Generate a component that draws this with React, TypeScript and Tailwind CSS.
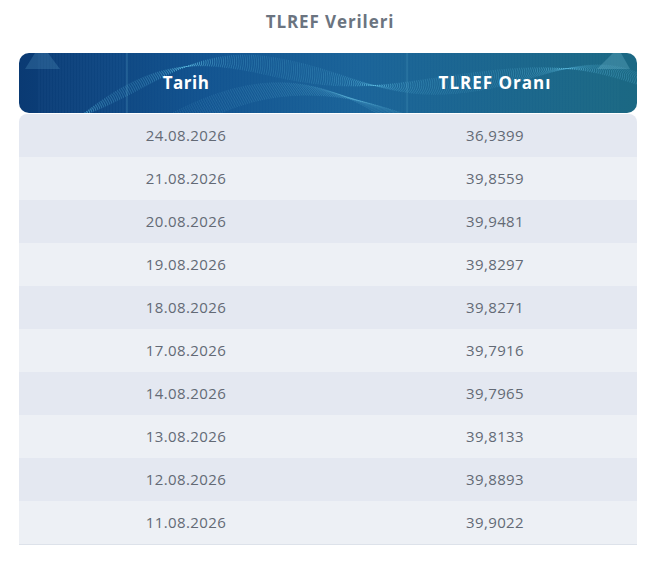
import React from "react";

const rows = [
  { date: "24.08.2026", rate: "36,9399" },
  { date: "21.08.2026", rate: "39,8559" },
  { date: "20.08.2026", rate: "39,9481" },
  { date: "19.08.2026", rate: "39,8297" },
  { date: "18.08.2026", rate: "39,8271" },
  { date: "17.08.2026", rate: "39,7916" },
  { date: "14.08.2026", rate: "39,7965" },
  { date: "13.08.2026", rate: "39,8133" },
  { date: "12.08.2026", rate: "39,8893" },
  { date: "11.08.2026", rate: "39,9022" },
];

// wavy dotted background for the header bar
function HeaderArt() {
  const waves = [];
  for (let i = 0; i < 20; i++) {
    const o = i * 1.6;
    // big ribbon: rises from bottom left, dips in the middle, climbs again on the right
    waves.push(
      <path
        key={"a" + i}
        d={`M 60 ${64} C 130 ${40 - o}, 170 ${-8 + o * 0.4}, 250 ${4 + o * 0.6} S 360 ${48 - o * 0.5}, 440 ${40 - o * 0.6} S 560 ${-4 + o * 0.5}, 620 ${20 + o * 0.4}`}
        fill="none"
        stroke="#6cc8ee"
        strokeOpacity={0.32}
        strokeWidth={0.7}
        strokeDasharray="0.8 1.4"
      />
    );
    // lower arc in the middle
    waves.push(
      <path
        key={"b" + i}
        d={`M ${150 + i * 2.5} 62 C ${230 + i} ${20 + o * 0.6}, ${290 + i} ${18 + o * 0.5}, ${360 + i * 1.5} ${62}`}
        fill="none"
        stroke="#7dd4f2"
        strokeOpacity={0.28}
        strokeWidth={0.7}
        strokeDasharray="0.8 1.4"
      />
    );
  }
  const stripes = [];
  for (let x = 20; x < 600; x += 3) {
    stripes.push(
      <line
        key={x}
        x1={x}
        y1={0}
        x2={x}
        y2={60}
        stroke="#9fd8ff"
        strokeOpacity={x < 110 ? 0.07 : 0.035}
        strokeWidth={1}
      />
    );
  }
  return (
    <svg
      className="absolute inset-0 h-full w-full"
      viewBox="0 0 618 60"
      preserveAspectRatio="none"
    >
      <defs>
        <linearGradient id="hg" x1="0" y1="0" x2="1" y2="0">
          <stop offset="0" stopColor="#0a3a73" />
          <stop offset="0.3" stopColor="#125390" />
          <stop offset="0.55" stopColor="#1a6399" />
          <stop offset="1" stopColor="#1b6883" />
        </linearGradient>
      </defs>
      <rect width="618" height="60" fill="url(#hg)" />
      {stripes}
      {waves}
      <line x1="108" y1="0" x2="108" y2="60" stroke="#8fe0f5" strokeOpacity="0.35" strokeWidth="0.8" />
      <line x1="388" y1="0" x2="388" y2="60" stroke="#8fe0f5" strokeOpacity="0.25" strokeWidth="0.8" />
      <polygon points="16,0 29,0 41,16 6,16" fill="#6fb0d8" fillOpacity="0.22" />
      <polygon points="594,0 602,0 611,16 578,16" fill="#7fc5dc" fillOpacity="0.28" />
    </svg>
  );
}

export default function App() {
  return (
    <div
      className="min-h-[561px] bg-white px-[19px] pt-[9px]"
      style={{ fontFamily: '"Open Sans", "Noto Sans", sans-serif' }}
    >
      <h2 className="mb-[18px] text-center text-[17px] font-bold leading-[26px] tracking-[0.9px] text-[#6b7480]">
        TLREF Verileri
      </h2>
      <div className="w-[618px]">
        <div className="relative grid h-[60px] grid-cols-[334px_1fr] items-center overflow-hidden rounded-[10px]">
          <HeaderArt />
          <div className="relative text-center text-[17px] font-bold tracking-[0.5px] text-white">
            Tarih
          </div>
          <div className="relative text-center text-[17px] font-bold tracking-[1px] text-white">
            TLREF Oranı
          </div>
        </div>
        <div className="mt-[1px] overflow-hidden rounded-t-[8px] border-b border-[#dde2ea]">
          {rows.map((r, i) => (
            <div
              key={r.date}
              className={`grid h-[43px] grid-cols-[334px_1fr] items-center text-center text-[15px] tracking-[0.4px] text-[#636a75] ${
                i % 2 === 0 ? "bg-[#e4e8f1]" : "bg-[#edf0f5]"
              }`}
            >
              <div>{r.date}</div>
              <div>{r.rate}</div>
            </div>
          ))}
        </div>
      </div>
    </div>
  );
}
